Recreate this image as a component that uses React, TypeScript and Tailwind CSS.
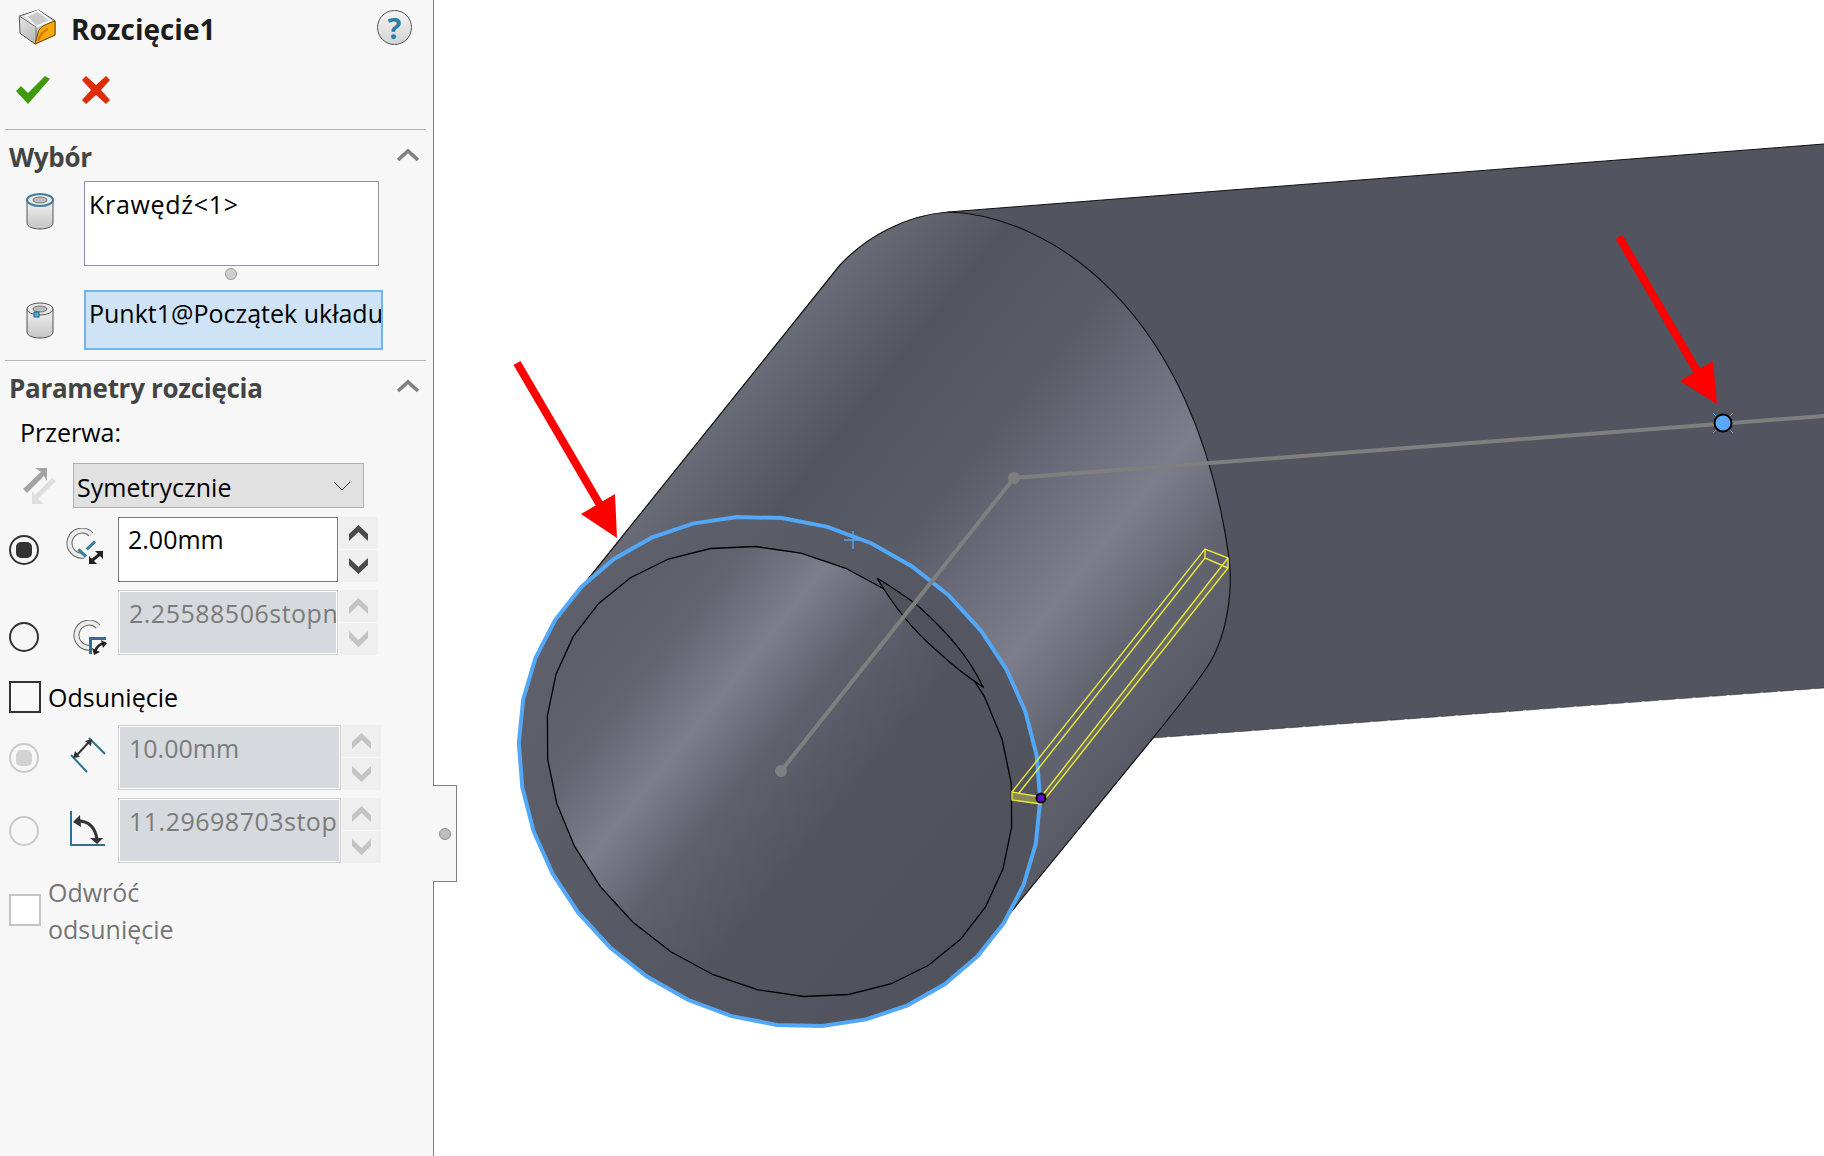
import type { ReactNode } from "react";

const font = { fontFamily: "'Open Sans', 'Noto Sans', sans-serif" };

// ellipse end of the tube, rotated along the tube normal
function ringPoints(a: number, b: number, n: number) {
  const cx = 779.5;
  const cy = 771.5;
  const r = (38.9 * Math.PI) / 180;
  const pts: string[] = [];
  for (let i = 0; i < n; i++) {
    const t = (i / n) * Math.PI * 2 + 0.08;
    const u = a * Math.cos(t);
    const v = b * Math.sin(t);
    pts.push(`${(cx + u * Math.cos(r) - v * Math.sin(r)).toFixed(1)},${(cy + u * Math.sin(r) + v * Math.cos(r)).toFixed(1)}`);
  }
  return pts.join(" ");
}

function Chevron({ up = true, color = "#808080" }: { up?: boolean; color?: string }) {
  return (
    <svg width="24" height="14" viewBox="0 0 24 14" fill="none">
      <path d={up ? "M2 12 L12 3 L22 12" : "M2 2 L12 11 L22 2"} stroke={color} strokeWidth="3.6" />
    </svg>
  );
}

function SpinChevron({ up = true, color }: { up?: boolean; color: string }) {
  return (
    <svg width="19" height="16" viewBox="0 0 19 16">
      <path d={up ? "M0 9 L9.5 0 L19 9 V16 L9.5 7 L0 16 Z" : "M0 0 L9.5 9 L19 0 V7 L9.5 16 L0 7 Z"} fill={color} />
    </svg>
  );
}

function CylinderIcon({ point = false }: { point?: boolean }) {
  return (
    <svg width="28" height="37" viewBox="0 0 28 37">
      <defs>
        <linearGradient id="cyl" x1="0" x2="0" y1="0" y2="1">
          <stop offset="0" stopColor="#f4f4f4" />
          <stop offset="1" stopColor="#c4c4c4" />
        </linearGradient>
      </defs>
      <path d="M1 7 V30 C1 38 27 38 27 30 V7 Z" fill="url(#cyl)" stroke="#555" strokeWidth="1" />
      <ellipse cx="14" cy="7" rx="13" ry="6" fill="#e8e8e8" stroke={point ? "#555" : "#3f7f9f"} strokeWidth={point ? 1 : 2} />
      <ellipse cx="14" cy="7" rx="7" ry="3" fill="#bcbcbc" stroke="#777" strokeWidth="1" />
      {point && <rect x="8" y="10" width="5" height="5" fill="#5aa9d0" stroke="#22607f" />}
    </svg>
  );
}

function GapIcon({ flip = false }: { flip?: boolean }) {
  return (
    <svg width="40" height="38" viewBox="0 0 40 38" fill="none">
      <path d="M26 6.5 A12.5 12.5 0 1 0 19 27.5" stroke="#666" strokeWidth="6" />
      <path d="M26 6.5 A12.5 12.5 0 1 0 19 27.5" stroke="#ececec" strokeWidth="4" />
      {flip ? (
        <>
          <path d="M18 34 V18 H35 V34 Z" fill="#f7f7f7" />
          <path d="M18.5 34 V18.5 H34" stroke="#2f6f8f" strokeWidth="3" />
          <path d="M23 32 C24 27 28 24 33 23" stroke="#222" strokeWidth="2.5" />
          <path d="M20 28 L22 35 L28 32 Z M29 20 L35 23 L31 28 Z" fill="#222" />
        </>
      ) : (
        <>
          <path d="M21.7 21.3 L30 13.7 M13.3 21.3 L21 28.7" stroke="#3b7f9f" strokeWidth="3" />
          <path d="M27 32.5 L35 26" stroke="#222" strokeWidth="3" />
          <path d="M24 28 V36 H32 Z M30 23 H38 V31 Z" fill="#222" />
        </>
      )}
    </svg>
  );
}

function OffsetIcon() {
  return (
    <svg width="36" height="36" viewBox="0 0 36 36" fill="none">
      <path d="M19 1 L35 17 M1 18 L17 35" stroke="#2f7191" strokeWidth="2" />
      <path d="M6 19 L19 5" stroke="#333" strokeWidth="2" />
      <path d="M3 21 L5 14 L10 20 Z M22 2 L15 4 L21 9 Z" fill="#333" />
    </svg>
  );
}

function AngleIcon() {
  return (
    <svg width="36" height="36" viewBox="0 0 36 36" fill="none">
      <path d="M1 0 V34 H35" stroke="#2f7191" strokeWidth="2" />
      <path d="M8 10 C18 10 25 16 27 28" stroke="#333" strokeWidth="3" />
      <path d="M3 11 L10 4 L11 16 Z M20 27 H33 L27 33 Z" fill="#333" />
    </svg>
  );
}

function Radio({ checked = false, disabled = false }: { checked?: boolean; disabled?: boolean }) {
  return (
    <div
      className={`w-[30px] h-[30px] rounded-full border-2 flex items-center justify-center bg-[#f7f7f7] ${
        disabled ? "border-[#c9c9c9]" : "border-[#333333]"
      }`}
    >
      {checked && <div className={`w-[16px] h-[16px] rounded-[5px] ${disabled ? "bg-[#d2d2d2]" : "bg-[#333333]"}`} />}
    </div>
  );
}

function Spinner({ disabled = false }: { disabled?: boolean }) {
  const c = disabled ? "#c4c4c4" : "#4a4a4a";
  return (
    <div className="w-[39px] h-[65px] flex flex-col gap-px ml-px shrink-0">
      <div className="flex-1 bg-[#efefef] flex items-center justify-center">
        <SpinChevron color={c} />
      </div>
      <div className="flex-1 bg-[#efefef] flex items-center justify-center">
        <SpinChevron up={false} color={c} />
      </div>
    </div>
  );
}

function SpinRow(props: {
  value: string;
  icon: ReactNode;
  checked?: boolean;
  disabled?: boolean;
  radioDisabled?: boolean;
  wide?: boolean;
  low?: boolean;
  iconClass: string;
}) {
  const { value, icon, checked, disabled, radioDisabled, wide, low, iconClass } = props;
  return (
    <div className="flex h-[65px]">
      <div className={`w-[118px] pl-[9px] flex items-center relative ${low ? "pt-[28px]" : ""}`}>
        <Radio checked={checked} disabled={radioDisabled} />
        <div className={iconClass}>{icon}</div>
      </div>
      <div
        className={`${wide ? "w-[223px]" : "w-[220px]"} h-[65px] overflow-hidden whitespace-nowrap pl-[9px] pt-[1px] text-[25px] leading-[40px] ${
          value.length > 10 ? "tracking-[0.5px]" : ""
        } ${
          disabled
            ? "bg-[#d6d9de] border-2 border-[#ffffff] outline outline-1 -outline-offset-1 outline-[#cfcfcf] text-[#7b7b7b]"
            : "bg-white border border-[#777777] text-black"
        }`}
      >
        {value}
      </div>
      <Spinner disabled={disabled} />
    </div>
  );
}

function SectionHeader({ title, className }: { title: string; className: string }) {
  return (
    <div className={`flex items-center justify-between pl-[9px] pr-[13px] ${className}`}>
      <span className="text-[26px] font-bold text-[#444444] tracking-[-0.3px] leading-[34px]">{title}</span>
      <div className="mb-[5px]">
        <Chevron />
      </div>
    </div>
  );
}

function Scene() {
  const outer = ringPoints(271, 244, 36);
  return (
    <svg className="block w-[1390px] h-[1156px]" viewBox="434 0 1390 1156" fill="none">
      <defs>
        <linearGradient id="tube" gradientUnits="userSpaceOnUse" x1="617" y1="538" x2="1041" y2="881">
          <stop offset="0" stopColor="#6a6c78" />
          <stop offset="0.2" stopColor="#52545f" />
          <stop offset="0.42" stopColor="#5a5c68" />
          <stop offset="0.7" stopColor="#7c7e8c" />
          <stop offset="0.85" stopColor="#626470" />
          <stop offset="1" stopColor="#585a65" />
        </linearGradient>
        <linearGradient id="inner" gradientUnits="userSpaceOnUse" x1="599" y1="626" x2="959" y2="917">
          <stop offset="0" stopColor="#5d5f6b" />
          <stop offset="0.14" stopColor="#626470" />
          <stop offset="0.3" stopColor="#7c7e8c" />
          <stop offset="0.45" stopColor="#5f616d" />
          <stop offset="0.65" stopColor="#52545e" />
          <stop offset="1" stopColor="#4f515b" />
        </linearGradient>
        <linearGradient id="ring" gradientUnits="userSpaceOnUse" x1="520" y1="600" x2="1000" y2="950">
          <stop offset="0" stopColor="#5f616d" />
          <stop offset="0.5" stopColor="#565863" />
          <stop offset="1" stopColor="#50525c" />
        </linearGradient>
      </defs>

      {/* horizontal tube */}
      <path d="M948 212 L1824 144 V688 L1153 738 L1100 400 Z" fill="#52545f" />
      <path d="M948 212 L1824 144" stroke="#111" strokeWidth="1" />
      <path d="M1153 738 L1824 688" stroke="#222" strokeWidth="1" strokeDasharray="14 3" opacity="0.5" />

      {/* tube toward the viewer */}
      <path
        d="M560 614 L840 265 C867 236 907 215 948 212 C1050 215 1195 310 1229 558 C1233 590 1228 640 1203 673 C1190 692 1170 717 1153 738 L980 950 Z"
        fill="url(#tube)"
      />
      <path
        d="M560 614 L840 265 C867 236 907 215 948 212 C1050 215 1195 310 1229 558 C1233 590 1228 640 1203 673 C1190 692 1170 717 1153 738 L980 950"
        stroke="#111"
        strokeWidth="1.2"
      />

      {/* end face */}
      <polygon points={outer} fill="url(#ring)" />
      <polygon points={ringPoints(247, 210, 32)} fill="url(#inner)" stroke="#000" strokeWidth="1.3" />
      <path
        d="M877 578 C893 605 915 632 936 650 C950 663 966 676 983 687 C968 655 945 630 917 605 C905 596 890 586 877 578 Z"
        fill="#50525c"
        stroke="#000"
        strokeWidth="1.3"
      />
      <polygon points={outer} stroke="#52a8f7" strokeWidth="4" />

      {/* sketch line */}
      <path d="M781 771 L1014 478 L1824 416" stroke="#7f7f7f" strokeWidth="4" />
      <circle cx="781" cy="771" r="6" fill="#7f7f7f" />
      <circle cx="1014" cy="478" r="6" fill="#7f7f7f" />

      {/* slot */}
      <path d="M1012 792 V800 L1041 804 V797 Z" fill="#c9c94a" fillOpacity="0.45" />
      <path d="M1041 804 L1228 568 V558 L1041 797 Z" fill="#c9c94a" fillOpacity="0.14" />
      <path
        d="M1012 792 L1205 549 L1228 558 V568 L1041 804 L1012 800 V792 L1041 797 L1228 558 M1205 549 V558 L1228 568 M1205 558 L1019 793"
        stroke="#e8e83c"
        strokeWidth="1.4"
      />
      <circle cx="1041" cy="798" r="4.5" fill="#5d10cc" stroke="#000" strokeWidth="2" />

      <path d="M853 531 V549 M844 540 H862" stroke="#52a8f7" strokeWidth="1.4" />

      {/* point on the sketch */}
      <path d="M1713 413 L1733 433 M1733 413 L1713 433" stroke="#52a8f7" strokeWidth="1" />
      <circle cx="1723" cy="423" r="8.5" fill="#5aa9f7" stroke="#000" strokeWidth="2" />

      {/* arrows */}
      <path d="M517 363 L600 505" stroke="#ff0000" strokeWidth="8" />
      <path d="M617 538 L615 494 L581 514 Z" fill="#ff0000" />
      <path d="M1619 237 L1700 376" stroke="#ff0000" strokeWidth="8" />
      <path d="M1717 404 L1713 361 L1680 381 Z" fill="#ff0000" />
    </svg>
  );
}

export default function App() {
  return (
    <div className="flex w-[1824px] h-[1156px] bg-white overflow-hidden" style={font}>
      <aside className="relative w-[434px] shrink-0 h-full bg-[#f7f7f7] border-r border-[#808080] flex flex-col">
        {/* title */}
        <div className="flex items-center h-[54px] pl-[18px] pr-[21px]">
          <svg width="39" height="37" viewBox="0 0 39 37">
            <defs>
              <linearGradient id="feat" x1="0" x2="1" y1="0" y2="1">
                <stop offset="0" stopColor="#f0f0f0" />
                <stop offset="1" stopColor="#9c9c9c" />
              </linearGradient>
            </defs>
            <path d="M20.3 1 L1.3 7 L2 24.3 L17 35 L37 26 V11.7 Z" fill="url(#feat)" stroke="#555" strokeWidth="1" />
            <path d="M8 7 L20 2 L32.7 11.7 L18 17.7 Z" fill="#c9c9c9" stroke="#f5f5f5" strokeWidth="2" />
            <path d="M1.3 7 L18 18 V35" fill="none" stroke="#777" strokeWidth="1" />
            <path d="M17 35 L20.3 22.7 C22 19 24 17.5 27 16 L37 11.7 V26 Z" fill="#f6a90f" stroke="#7a4a00" strokeWidth="1" />
            <path d="M20 32 C22 26 25 22 30 20" fill="none" stroke="#d07800" strokeWidth="2" />
          </svg>
          <span className="ml-[14px] mt-[3px] text-[28px] leading-[36px] font-bold text-[#1c1c1c]">Rozcięcie1</span>
          <div className="ml-auto w-[35px] h-[35px] rounded-full border border-[#555555] bg-linear-to-b from-[#f4f4f4] to-[#d4d4d4] flex items-center justify-center text-[29px] font-bold text-[#2a7fa8] leading-none">
            ?
          </div>
        </div>

        {/* ok / cancel */}
        <div className="flex items-center h-[75px] pl-[16px] pb-[3px]">
          <svg width="34" height="28" viewBox="0 0 34 28">
            <path d="M0 15 L5 10 L12 17 L29 0 L34 3 L12 28 Z" fill="#3f9a0e" />
          </svg>
          <svg className="ml-[32px]" width="28" height="28" viewBox="0 0 28 28">
            <path d="M4 0 L14 9 L24 0 L28 4 L19 14 L28 24 L24 28 L14 19 L4 28 L0 24 L9 14 L0 4 Z" fill="#dc2d06" />
          </svg>
        </div>
        <div className="h-px bg-[#b4b4b4] ml-[5px] mr-[7px]" />

        {/* selection */}
        <SectionHeader title="Wybór" className="mt-[10px] h-[34px]" />
        <div className="flex mt-[7px] pl-[26px]">
          <div className="w-[58px] pt-[12px]">
            <CylinderIcon />
          </div>
          <div className="w-[295px] h-[85px] bg-white border border-[#8a93a8] pl-[4px] text-[25px] leading-[44px] tracking-[0.7px] text-black">
            Krawędź&lt;1&gt;
          </div>
        </div>
        <div className="flex justify-center w-[462px] mt-[2px]">
          <div className="w-[12px] h-[12px] rounded-full bg-[#cfcfcf] border border-[#999999]" />
        </div>
        <div className="flex mt-[10px] pl-[26px]">
          <div className="w-[58px] pt-[12px]">
            <CylinderIcon point />
          </div>
          <div className="w-[299px] h-[60px] bg-[#cfe3f7] border-2 border-[#6db5ea] pl-[3px] text-[25px] leading-[42px] text-black whitespace-nowrap overflow-hidden">
            Punkt1@Początek układu
          </div>
        </div>
        <div className="h-px bg-[#b4b4b4] ml-[5px] mr-[7px] mt-[10px]" />

        {/* parameters */}
        <SectionHeader title="Parametry rozcięcia" className="mt-[10px] h-[34px]" />
        <div className="mt-[9px] pl-[20px] text-[25px] leading-[36px] text-black">Przerwa:</div>
        <div className="flex items-center mt-[13px] pl-[22px] h-[45px]">
          <svg width="35" height="38" viewBox="0 0 35 38">
            <path d="M1 22 L19 5 L13 1 H25 V14 L22 9 L5 26 Z" fill="#a3a3a3" />
            <path d="M34 14 L16 32 L22 37 H10 V24 L13 28 L30 11 Z" fill="#dedede" />
          </svg>
          <div className="ml-[16px] w-[291px] h-[45px] bg-[#e1e1e1] border border-[#b0b0b0] pl-[3px] pr-[12px] flex items-center justify-between text-[25px] text-black">
            <span className="leading-[44px] mt-[2px]">Symetrycznie</span>
            <svg width="18" height="10" viewBox="0 0 18 10" fill="none">
              <path d="M1 1 L9 9 L17 1" stroke="#333" strokeWidth="1" />
            </svg>
          </div>
        </div>
        <div className="mt-[9px] flex flex-col gap-[8px]">
          <SpinRow value="2.00mm" checked icon={<GapIcon />} iconClass="absolute left-[65px] top-[11px]" />
          <SpinRow
            value="2.25588506stopni"
            disabled
            low
            icon={<GapIcon flip />}
            iconClass="absolute left-[72px] top-[30px]"
          />
        </div>
        <div className="flex items-center mt-[26px] pl-[9px] h-[32px]">
          <div className="w-[32px] h-[32px] border-2 border-[#333333] bg-[#f9f9f9]" />
          <span className="ml-[7px] mt-[2px] text-[25px] text-black">Odsunięcie</span>
        </div>
        <div className="mt-[12px] flex flex-col gap-[8px]">
          <SpinRow
            value="10.00mm"
            checked
            disabled
            radioDisabled
            wide
            icon={<OffsetIcon />}
            iconClass="absolute left-[70px] top-[12px]"
          />
          <SpinRow
            value="11.29698703stopni"
            disabled
            radioDisabled
            wide
            icon={<AngleIcon />}
            iconClass="absolute left-[70px] top-[13px]"
          />
        </div>
        <div className="flex mt-[11px] pl-[9px]">
          <div className="w-[32px] h-[32px] border-2 border-[#c4c4c4] bg-white mt-[20px]" />
          <span className="ml-[7px] w-[160px] text-[25px] leading-[37px] text-[#757575]">Odwróć odsunięcie</span>
        </div>

        {/* flap on the panel edge */}
        <div className="absolute left-[433px] top-[785px] w-[24px] h-[97px] bg-[#f7f7f7] border border-l-0 border-[#808080] flex items-center justify-center">
          <div className="w-[12px] h-[12px] rounded-full bg-[#bdbdbd] border border-[#8a8a8a]" />
        </div>
      </aside>
      <main className="flex-1 min-w-0 h-full bg-white">
        <Scene />
      </main>
    </div>
  );
}
